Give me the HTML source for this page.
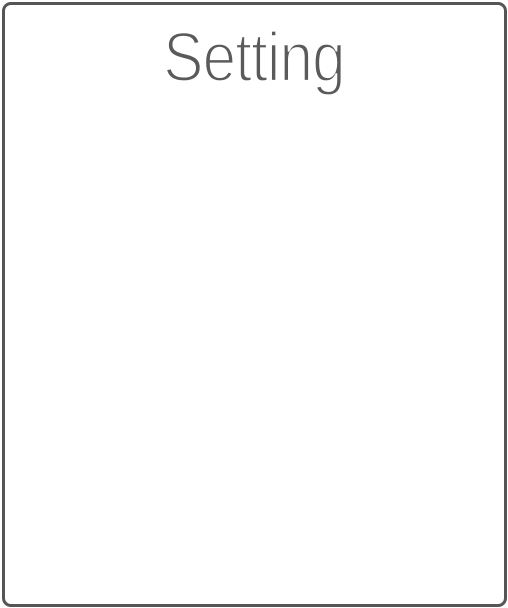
<!DOCTYPE html>
<html><head><style>
html,body{margin:0;padding:0;background:#fff;}
.box{position:absolute;left:1.5px;top:1.5px;width:499px;height:599px;border:3px solid #555;border-radius:9px;background:#fff;}
.t{position:absolute;left:0;width:508px;top:22px;text-align:center;font-family:"Liberation Sans",sans-serif;font-weight:400;font-size:70px;color:#5a5a5a;letter-spacing:-1px;transform:scaleX(0.86);line-height:70px;-webkit-text-stroke:2.2px #fff;}
</style></head><body>
<div class="box"></div>
<div class="t">Setting</div>
</body></html>
